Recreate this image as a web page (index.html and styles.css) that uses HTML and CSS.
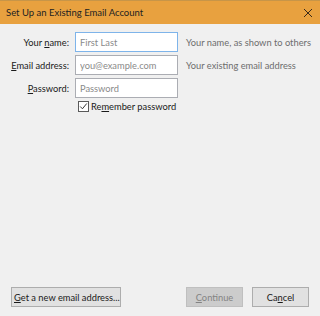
FILE: index.html
```html
<!DOCTYPE html>
<html lang="en">
<head>
    <meta charset="UTF-8">
    <title>Set Up an Existing Email Account</title>
    <link rel="stylesheet" href="styles.css">
</head>
<body>
    <div class="dialog">
        <div class="titlebar">
            <span class="title">Set Up an Existing Email Account</span>
            <svg class="close" width="10" height="10" viewBox="0 0 10 10">
                <path d="M1 1L9 9M9 1L1 9" stroke="#3a2a1a" stroke-width="1"/>
            </svg>
        </div>

        <div class="content">
            <form class="fields">
                <label for="realname">Your <u>n</u>ame:</label>
                <input type="text" id="realname" class="focused" placeholder="First Last">
                <span class="hint">Your name, as shown to others</span>

                <label for="email"><u>E</u>mail address:</label>
                <input type="text" id="email" placeholder="you@example.com">
                <span class="hint">Your existing email address</span>

                <label for="password"><u>P</u>assword:</label>
                <input type="password" id="password" placeholder="Password">
                <span class="hint"></span>

                <span></span>
                <label class="remember">
                    <span class="checkbox">
                        <svg width="11" height="11" viewBox="0 0 11 11">
                            <path d="M1.5 5.5L4.2 8.3L9.5 1.8" fill="none" stroke="#333" stroke-width="1.2"/>
                        </svg>
                    </span>
                    <span>Re<u>m</u>ember password</span>
                </label>
            </form>
        </div>

        <div class="footer">
            <button type="button" class="wide"><u>G</u>et a new email address...</button>
            <div class="spacer"></div>
            <button type="button" class="disabled" disabled><u>C</u>ontinue</button>
            <button type="button">Ca<u>n</u>cel</button>
        </div>
    </div>
</body>
</html>
```

FILE: styles.css
```css
body {
    margin: 0;
    padding: 0;
    background-color: #f0f0f0;
    font-family: Lato, "Noto Sans", sans-serif;
    font-size: 9.3px;
    color: #1a1a1a;
}
.dialog {
    display: flex;
    flex-direction: column;
    width: 320px;
    height: 316px;
}
.titlebar {
    display: flex;
    align-items: center;
    justify-content: space-between;
    height: 24px;
    padding: 0 6px;
    background-color: #e8a13f;
    border-top: 1px solid #c79548;
    box-sizing: border-box;
}
.title {
    font-size: 9.5px;
    color: #222;
}
.close {
    margin-right: 1px;
}
.content {
    flex: 1;
    padding: 8px 0 0 0;
}
.fields {
    display: grid;
    grid-template-columns: 69px 103px auto;
    column-gap: 6px;
    row-gap: 3px;
    align-items: center;
    margin: 0;
}
.fields label {
    text-align: right;
    white-space: nowrap;
}
.fields input {
    height: 20px;
    box-sizing: border-box;
    border: 1px solid #abadb3;
    background-color: #fff;
    padding: 0 4px;
    font-family: inherit;
    font-size: 9.3px;
    outline: none;
}
.fields input.focused {
    border-color: #7eb4ea;
}
.fields input::placeholder {
    color: #8a8a8a;
}
.hint {
    margin-left: 2px;
    color: #6d6d6d;
    white-space: nowrap;
}
.fields .remember {
    grid-column: 2 / 4;
    display: flex;
    align-items: center;
    gap: 2px;
    text-align: left;
    padding-left: 3px;
}
.checkbox {
    display: flex;
    align-items: center;
    justify-content: center;
    width: 11px;
    height: 11px;
    box-sizing: border-box;
    border: 1px solid #5a5a5a;
    background-color: #fff;
}
.checkbox svg {
    width: 9px;
    height: 9px;
}
.footer {
    display: flex;
    align-items: center;
    gap: 9px;
    padding: 0 11px 9px 11px;
}
.spacer {
    flex: 1;
}
button {
    height: 20px;
    padding: 0 2px;
    width: 57px;
    border: 1px solid #adadad;
    background-color: #e1e1e1;
    font-family: inherit;
    font-size: 9.3px;
    color: #1a1a1a;
    white-space: nowrap;
}
button.wide {
    width: 110px;
}
button.disabled {
    background-color: #cccccc;
    border-color: #bfbfbf;
    color: #838383;
}
```
